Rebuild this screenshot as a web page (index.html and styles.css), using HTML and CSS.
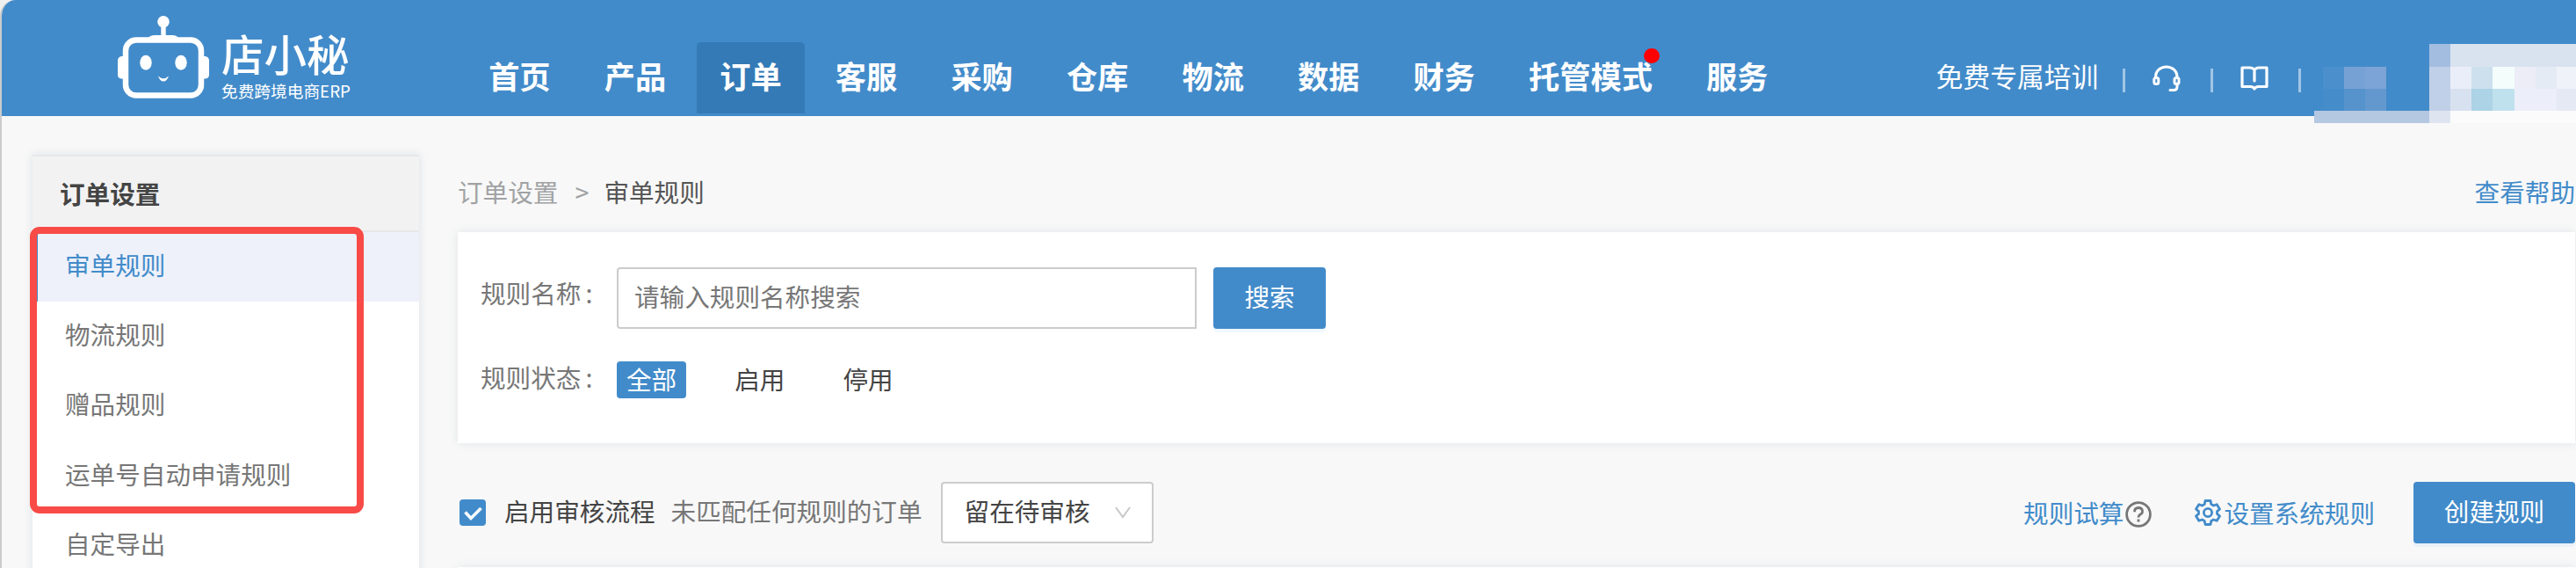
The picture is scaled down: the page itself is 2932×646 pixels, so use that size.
FILE: index.html
```html
<!DOCTYPE html>
<html lang="zh-CN">
<head>
    <meta charset="UTF-8">
    <meta name="viewport" content="width=device-width, initial-scale=1.0">
    <title>店小秘 - 审单规则</title>
    <link rel="stylesheet" href="styles.css">
</head>
<body>
    <div class="page">
        <header class="header">
            <a class="logo">
                <svg class="robot" width="104" height="94" viewBox="0 0 104 94">
                    <circle cx="52" cy="6.8" r="6.8" fill="#fff"/>
                    <path d="M49.3 10h5.4v13h-5.4z" fill="#fff"/>
                    <path d="M35 25q2-3 7-3h20q5 0 7 3z" fill="#fff"/>
                    <rect x="9" y="27.5" width="86" height="63" rx="12" fill="none" stroke="#fff" stroke-width="6.5"/>
                    <path d="M7 46H4q-4 1-4 5v16q0 4 4 4.500h3zM97 46h3q4 1 4 5v16q0 4-4 4.500h-3z" fill="#fff"/>
                    <ellipse cx="32" cy="53.300" rx="6.700" ry="8.500" fill="#fff"/>
                    <ellipse cx="72" cy="53.300" rx="6.700" ry="8.500" fill="#fff"/>
                    <path d="M46 68.500q6 5.500 12 0q-2 6-6 6t-6-6z" fill="#fff"/>
                </svg>
                <span class="brand">
                    <span class="brand-name">店小秘</span>
                    <span class="brand-sub">免费跨境电商ERP</span>
                </span>
            </a>
            <nav class="nav">
                <a>首页</a>
                <a>产品</a>
                <a class="active">订单</a>
                <a>客服</a>
                <a>采购</a>
                <a>仓库</a>
                <a>物流</a>
                <a>数据</a>
                <a>财务</a>
                <a>托管模式<i class="dot"></i></a>
                <a>服务</a>
            </nav>
            <div class="tools">
                <a>免费专属培训</a>
                <i class="line"></i>
                <svg width="32" height="32" viewBox="0 0 32 32" fill="none" stroke="#fff" stroke-width="3">
                    <path d="M3.500 15v-1a12.200 11 0 0 1 24.500 0v1"/>
                    <rect x="1.800" y="15.500" width="5" height="7" rx="2"/>
                    <rect x="25" y="15.500" width="5" height="7" rx="2"/>
                    <path d="M28 22v3.500q0 4-4 4h-4" stroke-linecap="round"/>
                </svg>
                <i class="line"></i>
                <svg width="32" height="32" viewBox="0 0 32 32" fill="none" stroke="#fff" stroke-width="3.200" stroke-linejoin="round">
                    <path d="M16 6.500Q14 4 11 4H2v21.500h9.500q3 0 4.500 2.500 1.500-2.500 4.500-2.500H30V4h-9q-3 0-5 2.500V19" stroke-linecap="round"/>
                </svg>
                <i class="line"></i>
            </div>
            <div class="mosaic">
                <i class="m1"></i><i class="m2"></i><i class="m3"></i>
                <i class="m4"></i><i class="m5"></i><i class="m6"></i>
                <i class="m7"></i><i class="m8"></i><i class="m9"></i><i class="m10"></i>
                <i class="m11"></i>
                <i class="m12"></i><i class="m13"></i><i class="m14"></i><i class="m15"></i><i class="m16"></i><i class="m17"></i>
                <i class="m18"></i><i class="m19"></i><i class="m20"></i><i class="m21"></i><i class="m22"></i>
                <i class="m23"></i>
            </div>
        </header>

        <div class="body">
            <aside class="sidebar">
                <h3>订单设置</h3>
                <ul>
                    <li class="active">审单规则</li>
                    <li>物流规则</li>
                    <li>赠品规则</li>
                    <li>运单号自动申请规则</li>
                    <li>自定导出</li>
                </ul>
                <div class="mark"></div>
            </aside>

            <main class="main">
                <div class="crumbs">
                    <span>订单设置</span>
                    <span class="sep">&gt;</span>
                    <b>审单规则</b>
                    <a class="help">查看帮助</a>
                </div>

                <section class="panel">
                    <div class="row">
                        <label>规则名称<i>:</i></label>
                        <input type="text" class="search" placeholder="请输入规则名称搜索">
                        <button class="btn">搜索</button>
                    </div>
                    <div class="row status">
                        <label>规则状态<i>:</i></label>
                        <span class="tag on">全部</span>
                        <span class="tag">启用</span>
                        <span class="tag">停用</span>
                    </div>
                </section>

                <div class="actions">
                    <span class="check">
                        <svg width="30" height="30" viewBox="0 0 30 30" fill="none" stroke="#fff" stroke-width="3.500">
                            <path d="M6.500 14.500l6.500 7L24.500 10"/>
                        </svg>
                    </span>
                    <span class="flow">启用审核流程</span>
                    <span class="hint">未匹配任何规则的订单</span>
                    <div class="select">
                        <span>留在待审核</span>
                        <svg width="18" height="14" viewBox="0 0 18 14" fill="none" stroke="#c8c8c8" stroke-width="2">
                            <path d="M1 1l8 11 8-11"/>
                        </svg>
                    </div>
                    <a class="trial">规则试算</a>
                    <svg class="question" width="30" height="30" viewBox="0 0 30 30" fill="none" stroke="#777" stroke-width="2.800">
                        <circle cx="15" cy="15" r="13.400"/>
                        <path d="M10.500 12.200q0-4.700 4.500-4.700t4.500 4.200q0 2.200-2.600 3.600-1.900 1-1.900 3.200"/>
                        <path d="M15 20.500v3"/>
                    </svg>
                    <a class="system">
                        <svg width="30" height="30" viewBox="0 0 30 30" fill="none" stroke="#428bca" stroke-width="2.800" stroke-linejoin="round">
                            <path d="M12 1.500h6l.8 4 2.700 1.500 3.700-1.300 3.300 5.300-3 2.600v2.800l3 2.600-3.300 5.300-3.700-1.300-2.700 1.500-.8 4h-6l-.8-4L8.500 23l-3.700 1.300L1.500 19l3-2.600v-2.800l-3-2.600 3.300-5.300L8.500 7l2.700-1.500z"/>
                            <circle cx="15" cy="15" r="4.600"/>
                        </svg>
                        设置系统规则
                    </a>
                    <button class="btn create">创建规则</button>
                </div>

                <section class="panel list"></section>
            </main>
        </div>
    </div>
</body>
</html>
```

FILE: styles.css
```css
* {
    box-sizing: border-box;
}
body {
    margin: 0;
    height: 646px;
    overflow: hidden;
    background: #f0f0f0;
    font-family: "Noto Sans CJK SC", sans-serif;
    font-size: 28.6px;
    line-height: 40px;
    color: #444;
}
i {
    font-style: normal;
}
svg {
    display: block;
    flex: none;
}
.page {
    height: 646px;
    border-left: 2px solid #ccc;
    border-radius: 18px 0 0 0;
    background: #f8f8f8;
    overflow: hidden;
}

/* header */
.header {
    display: flex;
    position: relative;
    height: 132px;
    background: #428bca;
    color: #fff;
    white-space: nowrap;
}
.logo {
    display: flex;
    width: 396px;
    margin-left: 132px;
    padding-top: 18px;
}
.brand {
    display: flex;
    flex-direction: column;
    padding: 15px 0 0 14px;
}
.brand-name {
    height: 57px;
    font-size: 48.5px;
    line-height: 54px;
    font-weight: 500;
}
.brand-sub {
    font-size: 18.7px;
    line-height: 26px;
}
.nav {
    display: flex;
    gap: 8.8px;
    padding-top: 48px;
}
.nav a {
    position: relative;
    height: 81px;
    padding: 0 26.2px;
    border-radius: 5px 5px 0 0;
    font-size: 35.2px;
    line-height: 76px;
    font-weight: 700;
}
.nav a.active {
    background: #337ab7;
}
.dot {
    position: absolute;
    top: 7px;
    right: 18px;
    width: 18px;
    height: 17px;
    border-radius: 50%;
    background: #f00;
}
.tools {
    display: flex;
    align-items: center;
    margin-left: 165px;
    padding-top: 48px;
    height: 129px;
    font-size: 30.8px;
}
.tools a {
    width: 212px;
    padding-bottom: 5px;
}
.tools svg {
    margin: 0 34px 0 31px;
}
.line {
    width: 3px;
    height: 27px;
    margin-top: 6px;
    background: rgba(255, 255, 255, 0.5);
}

/* blurred account block */
.mosaic {
    display: grid;
    position: absolute;
    left: 2632px;
    top: 50px;
    grid-template-columns: 10px 24px 24px 24px 49px 24px 24px 24px 25px 24px 24px 22px;
    grid-template-rows: 26px 25px 25px 14px;
}
.m1 { grid-area: 2 / 2; background: #4b8fcd; }
.m2 { grid-area: 2 / 3; background: #76a1d4; }
.m3 { grid-area: 2 / 4; background: #7ca4d6; }
.m4 { grid-area: 3 / 2; background: #458ccb; }
.m5 { grid-area: 3 / 3; background: #5693cd; }
.m6 { grid-area: 3 / 4; background: #6398cf; }
.m7 { grid-area: 4 / 1 / 5 / 6; background: #b4c8e2; }
.m8 { grid-area: 1 / 6; background: #a3bde0; }
.m9 { grid-area: 2 / 6 / 4 / 7; background: #c0d0e8; }
.m10 { grid-area: 4 / 6; background: #dee5f0; }
.m11 { grid-area: 1 / 7 / 2 / 13; background: #d9e3ef; }
.m12 { grid-area: 2 / 7; background: #eaeef8; }
.m13 { grid-area: 2 / 8; background: #cde0ee; }
.m14 { grid-area: 2 / 9; background: #f4fdfc; }
.m15 { grid-area: 2 / 10; background: #ecedf7; }
.m16 { grid-area: 2 / 11; background: #e4ebf4; }
.m17 { grid-area: 2 / 12; background: #eff2f8; }
.m18 { grid-area: 3 / 7; background: #d8e1ef; }
.m19 { grid-area: 3 / 8; background: #acd3e6; }
.m20 { grid-area: 3 / 9; background: #bfe1ed; }
.m21 { grid-area: 3 / 10 / 4 / 12; background: #eceff9; }
.m22 { grid-area: 3 / 12; background: #e5e9f4; }
.m23 { grid-area: 4 / 7 / 5 / 13; background: #fbfbfb; }

.body {
    display: flex;
    gap: 44px;
    padding-left: 35px;
}

/* sidebar */
.sidebar {
    position: relative;
    width: 440px;
    height: 520px;
    margin-top: 44px;
    background: #fff;
    box-shadow: 0 0 10px rgba(60, 90, 120, 0.15);
}
.sidebar h3 {
    height: 88px;
    margin: 0;
    padding-left: 31px;
    border-top: 2px solid #e6e8e9;
    border-bottom: 2px solid #e6e8e9;
    background: #f2f2f2;
    font-size: 28.6px;
    line-height: 84px;
}
.sidebar ul {
    margin: 0;
    padding: 0;
    list-style: none;
}
.sidebar li {
    height: 79.2px;
    padding-left: 37px;
    line-height: 74px;
    color: #777;
}
.sidebar li.active {
    padding-left: 31px;
    border-left: 6px solid #428bca;
    background: #eef1fa;
    color: #428bca;
}
.mark {
    position: absolute;
    left: -3px;
    top: 82px;
    width: 380px;
    height: 326px;
    border: 8px solid #f84b47;
    border-radius: 11px;
}

/* content */
.main {
    width: 2410px;
}
.crumbs {
    display: flex;
    height: 132px;
    padding-top: 66px;
    color: #a0a2a4;
}
.crumbs .sep {
    width: 52px;
    padding-left: 19px;
}
.crumbs b {
    font-weight: 400;
    color: #555;
}
.help {
    margin-left: auto;
    color: #428bca;
}
.panel {
    height: 240px;
    padding: 40px 26px;
    background: #fff;
    box-shadow: 0 0 10px rgba(60, 90, 120, 0.12);
}
.row {
    display: flex;
    height: 70px;
}
.row label {
    width: 155px;
    padding-top: 9px;
    color: #777;
}
.row label i {
    margin-left: 5px;
}
.search {
    width: 660px;
    height: 70px;
    margin-right: 19px;
    padding: 0 18px 5px;
    border: 2px solid #ccc;
    border-radius: 4px 0 0 4px;
    font: inherit;
}
.search::placeholder {
    color: #777;
}
.btn {
    width: 128px;
    height: 70px;
    padding: 0 0 5px;
    border: none;
    border-radius: 4px;
    background: #428bca;
    box-shadow: 0 4px 0 rgba(24, 144, 255, 0.06);
    color: #fff;
    font: inherit;
    white-space: nowrap;
}
.status {
    height: 42px;
    margin-top: 37px;
}
.status label {
    padding-top: 0;
    line-height: 36px;
}
.tag {
    height: 42px;
    margin-right: 44px;
    padding: 0 11px;
    border-radius: 4px;
    line-height: 39px;
}
.tag.on {
    background: #428bca;
    color: #fff;
}
.actions {
    display: flex;
    align-items: center;
    height: 141px;
    padding-top: 17px;
    white-space: nowrap;
}
.check {
    width: 30px;
    height: 30px;
    margin: 0 21px 0 2px;
    border-radius: 4px;
    background: #428bca;
}
.flow,
.hint {
    padding-bottom: 4px;
}
.hint {
    margin: 0 21px 0 18px;
    color: #777;
}
.select {
    display: flex;
    align-items: center;
    justify-content: space-between;
    width: 242px;
    height: 70px;
    padding: 0 24px 0 25px;
    border: 2px solid #ccc;
    border-radius: 4px;
    background: #fff;
}
.select span {
    padding-bottom: 4px;
}
.trial {
    margin-left: auto;
    color: #428bca;
}
.question {
    margin: 3px 49px 0 2px;
}
.system {
    display: flex;
    gap: 3px;
    align-items: center;
    color: #428bca;
}
.create {
    width: 184px;
    margin-left: 44px;
}
```
